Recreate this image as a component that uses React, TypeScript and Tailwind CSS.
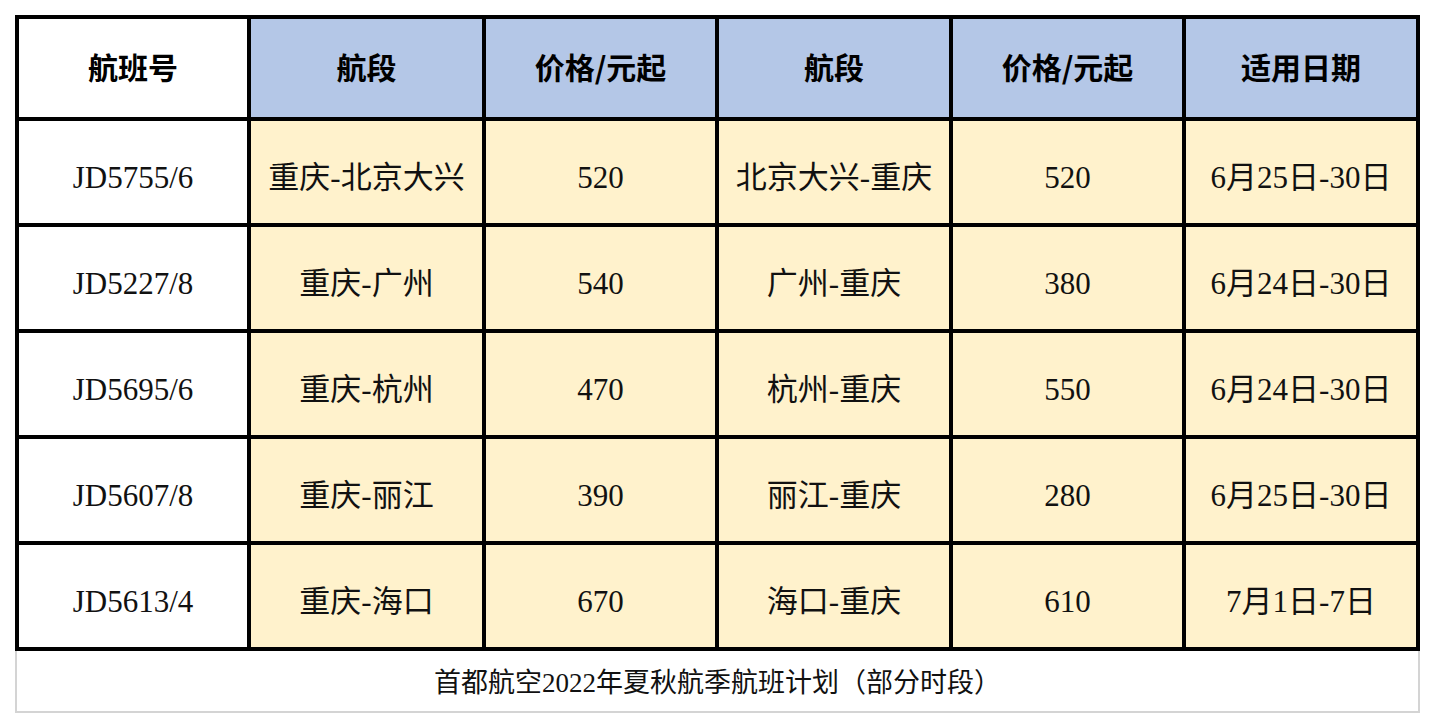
const headers = ['航班号', '航段', '价格/元起', '航段', '价格/元起', '适用日期'];

const rows = [
  ['JD5755/6', '重庆-北京大兴', '520', '北京大兴-重庆', '520', '6月25日-30日'],
  ['JD5227/8', '重庆-广州', '540', '广州-重庆', '380', '6月24日-30日'],
  ['JD5695/6', '重庆-杭州', '470', '杭州-重庆', '550', '6月24日-30日'],
  ['JD5607/8', '重庆-丽江', '390', '丽江-重庆', '280', '6月25日-30日'],
  ['JD5613/4', '重庆-海口', '670', '海口-重庆', '610', '7月1日-7日'],
];

const serif = "font-['Liberation_Serif','Noto_Sans_CJK_SC',serif]";

export default function App() {
  return (
    <div className="min-h-[728px] bg-white pt-[15px] pl-[15px]">
      <div className="w-[1405px]">
        <div className="grid grid-cols-[228px_231px_229px_230px_229px_230px] grid-rows-[98px_repeat(5,102px)] gap-[4px] bg-black p-[4px]">
          {headers.map((h, i) => (
            <div
              key={i}
              className={`flex items-center justify-center pb-[4px] text-[30px] font-bold text-black font-['Noto_Sans_CJK_SC',sans-serif] ${
                i === 0 ? 'bg-white' : 'bg-[#b4c7e7]'
              }`}
            >
              {h}
            </div>
          ))}
          {rows.map((r, ri) =>
            r.map((c, ci) => (
              <div
                key={`${ri}-${ci}`}
                className={`flex items-center justify-center pt-[12px] text-[31px] text-[#111] ${serif} ${
                  ci === 0 ? 'bg-white' : 'bg-[#fff2cc]'
                }`}
              >
                {c}
              </div>
            ))
          )}
        </div>
        <div
          className={`flex h-[62px] items-center justify-center border-x-2 border-b-2 border-[#d4d4d4] bg-white pt-[4px] text-[27px] text-[#111] ${serif}`}
        >
          首都航空2022年夏秋航季航班计划（部分时段）
        </div>
      </div>
    </div>
  );
}
